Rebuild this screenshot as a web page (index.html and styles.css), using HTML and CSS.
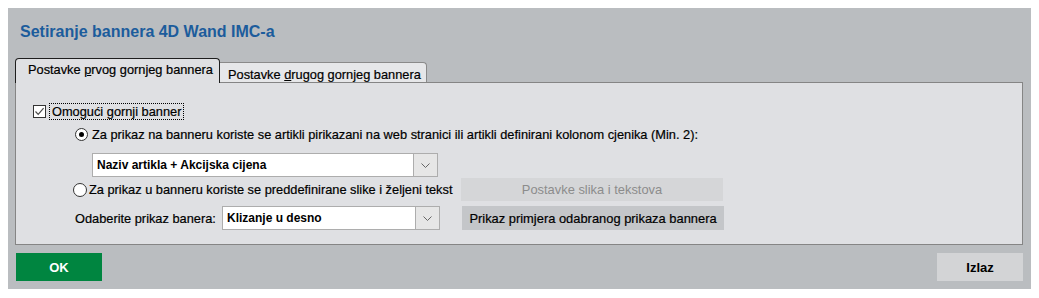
FILE: index.html
```html
<!DOCTYPE html>
<html lang="hr">
<head>
    <meta charset="UTF-8">
    <meta name="viewport" content="width=device-width, initial-scale=1.0">
    <title>Setiranje bannera 4D Wand IMC-a</title>
    <link rel="stylesheet" href="styles.css">
</head>
<body>
    <div class="dialog">
        <h1 class="dialog-title">Setiranje bannera 4D Wand IMC-a</h1>

        <div class="tabs">
            <div class="tab active">Postavke <u>p</u>rvog gornjeg bannera</div>
            <div class="tab">Postavke <u>d</u>rugog gornjeg bannera</div>
        </div>

        <div class="panel">
            <div class="row row-check">
                <span class="checkbox">
                    <svg width="11" height="11" viewBox="0 0 11 11"><path d="M1.5 5.5 L4.2 8.3 L9.6 2.2" fill="none" stroke="#4a4a4a" stroke-width="1.2"/></svg>
                </span>
                <span class="focus-label">Omogući gornji banner</span>
            </div>

            <div class="row row-radio1">
                <span class="radio checked"></span>
                <span>Za prikaz na banneru koriste se artikli pirikazani na web stranici ili artikli definirani kolonom cjenika (Min. 2):</span>
            </div>

            <div class="row row-combo1">
                <div class="combo combo-wide">
                    <span class="combo-text">Naziv artikla + Akcijska cijena</span>
                    <span class="combo-arrow"><svg width="9" height="5" viewBox="0 0 9 5"><path d="M0.5 0.5 L4.5 4.5 L8.5 0.5" fill="none" stroke="#666" stroke-width="1"/></svg></span>
                </div>
            </div>

            <div class="row row-radio2">
                <div class="radio-label">
                    <span class="radio"></span>
                    <span>Za prikaz u banneru koriste se preddefinirane slike i željeni tekst</span>
                </div>
                <button class="btn btn-disabled" disabled>Postavke slika i tekstova</button>
            </div>

            <div class="row row-select">
                <span class="field-label">Odaberite prikaz banera:</span>
                <div class="combo combo-small">
                    <span class="combo-text">Klizanje u desno</span>
                    <span class="combo-arrow"><svg width="9" height="5" viewBox="0 0 9 5"><path d="M0.5 0.5 L4.5 4.5 L8.5 0.5" fill="none" stroke="#666" stroke-width="1"/></svg></span>
                </div>
                <button class="btn">Prikaz primjera odabranog prikaza bannera</button>
            </div>
        </div>

        <div class="footer">
            <button class="btn-ok">OK</button>
            <button class="btn-exit">Izlaz</button>
        </div>
    </div>
</body>
</html>
```

FILE: styles.css
```css
body {
    margin: 8px;
    background-color: #ffffff;
    font-family: "Liberation Sans", Arial, sans-serif;
    font-size: 12.8px;
    color: #000000;
    -webkit-text-stroke: 0.2px #000000;
}
.dialog {
    width: 1023px;
    height: 281px;
    box-sizing: border-box;
    background-color: #babdc0;
    box-shadow: 1px 2px 5px rgba(0, 0, 0, 0.45);
    display: flex;
    flex-direction: column;
}
.dialog-title {
    margin: 0;
    padding: 14px 0 0 12px;
    font-size: 16px;
    line-height: 20px;
    font-weight: bold;
    color: #1c5c9c;
    -webkit-text-stroke: 0;
}
.tabs {
    display: flex;
    align-items: flex-end;
    margin: 16px 0 0 7px;
    height: 24px;
}
.tab {
    box-sizing: border-box;
    height: 20px;
    width: 207px;
    padding: 5px 0 0 8px;
    line-height: 14px;
    background-color: #e6e7e9;
    border: 1px solid #8a8a8a;
    border-left: none;
    border-bottom: none;
    border-radius: 0 4px 0 0;
    white-space: nowrap;
}
.tab.active {
    position: relative;
    z-index: 1;
    height: 25px;
    width: 205px;
    margin-bottom: -1px;
    padding: 4px 0 0 12px;
    background-color: #dfe0e3;
    border: 1px solid #1e1e1e;
    border-bottom: none;
    border-radius: 4px 4px 0 0;
}
.panel {
    box-sizing: border-box;
    height: 163px;
    margin: 0 8px 0 7px;
    padding-top: 20px;
    background-color: #dfe0e3;
    border: 1px solid #858585;
}
.row {
    display: flex;
    align-items: center;
    white-space: nowrap;
}
.row-check {
    height: 17px;
    margin-left: 17px;
}
.checkbox {
    box-sizing: border-box;
    width: 13px;
    height: 13px;
    border: 1px solid #333333;
    background-color: #ffffff;
    display: flex;
    align-items: center;
    justify-content: center;
}
.focus-label {
    margin-left: 3px;
    padding: 1px 2px 0 2px;
    line-height: 14px;
    border: 1px dotted #000000;
}
.radio {
    box-sizing: border-box;
    width: 13px;
    height: 13px;
    border: 1px solid #333333;
    border-radius: 50%;
    background-color: #ffffff;
    display: inline-flex;
    align-items: center;
    justify-content: center;
    margin-right: 4px;
    flex: none;
}
.radio.checked::after {
    content: "";
    width: 5px;
    height: 5px;
    border-radius: 50%;
    background-color: #000000;
}
.row-radio1 {
    height: 15px;
    margin: 7px 0 0 59px;
}
.row-combo1 {
    margin: 11px 0 0 76px;
}
.combo {
    box-sizing: border-box;
    height: 24px;
    background-color: #ffffff;
    border: 1px solid #adadad;
    display: flex;
    align-items: stretch;
}
.combo-wide {
    width: 346px;
}
.combo-small {
    width: 218px;
}
.combo-text {
    flex: 1;
    padding-left: 4px;
    line-height: 22px;
    font-size: 12px;
    font-weight: bold;
    -webkit-text-stroke: 0;
}
.combo-arrow {
    width: 23px;
    border-left: 1px solid #adadad;
    background-color: #e6e6e6;
    display: flex;
    align-items: center;
    justify-content: center;
}
.row-radio2 {
    height: 23px;
    margin: 1px 0 0 57px;
}
.radio-label {
    width: 388px;
    display: flex;
    align-items: center;
}
.radio-label .radio {
    width: 14px;
    height: 14px;
    margin-right: 2px;
}
.btn {
    box-sizing: border-box;
    width: 262px;
    height: 23px;
    padding: 0;
    border: none;
    background-color: #c4c6c9;
    color: #000000;
    font-family: inherit;
    font-size: 12.9px;
    -webkit-text-stroke: inherit;
}
.btn-disabled {
    background-color: #d5d6d8;
    color: #8c8c8c;
    -webkit-text-stroke: 0;
}
.row-select {
    margin: 5px 0 0 59px;
}
.row-select .btn {
    height: 24px;
    margin-left: 22px;
}
.field-label {
    width: 147px;
}
.footer {
    display: flex;
    justify-content: space-between;
    margin: 8px 8px 0 8px;
}
.btn-ok, .btn-exit {
    width: 86px;
    height: 28px;
    border: none;
    font-family: inherit;
    font-size: 13px;
    font-weight: bold;
    -webkit-text-stroke: 0;
}
.btn-ok {
    background-color: #008540;
    color: #ffffff;
}
.btn-exit {
    background-color: #d3d4d6;
    color: #000000;
}
```
